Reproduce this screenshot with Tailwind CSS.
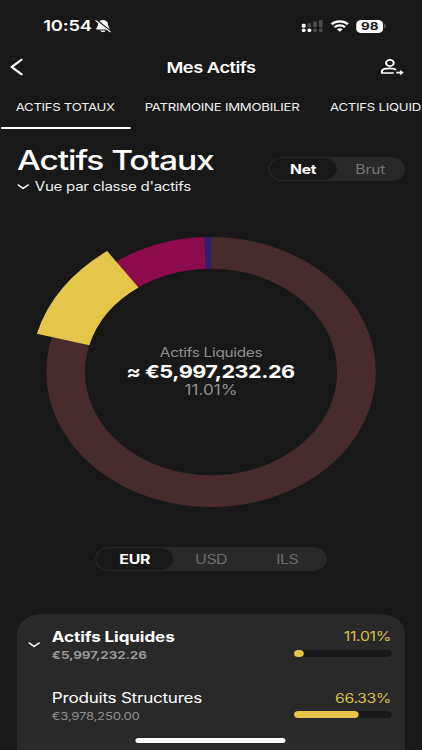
<!DOCTYPE html>
<html lang="fr">
<head>
  <meta charset="UTF-8" />
  <meta name="viewport" content="width=device-width, initial-scale=1.0"/>
  <title>Mes Actifs</title>
  <script src="https://cdn.jsdelivr.net/npm/@tailwindcss/browser@4"></script>
</head>
<body class="bg-[#181818] overflow-hidden">
  <div class="relative w-[346px] h-[750px] origin-top-left scale-x-[1.22] overflow-hidden bg-[#181818] text-white font-['Inter',sans-serif]">

    <!-- Status bar -->
    <div class="h-[52px] flex items-center justify-between pl-[35.500px] pr-[30px]">
      <div class="flex items-center gap-[2.500px]">
        <span class="text-[15px] font-semibold tracking-[-0.15px]">10:54</span>
        <svg class="w-[13px] h-[14px]" viewBox="0 0 13 14" fill="none">
          <path d="M6.300 1C4 1 2.300 2.700 2.300 5.200 2.300 8 .8 8.600.8 10.500h11.200c0-1.900-1.500-2.500-1.500-5.300C10.500 2.700 8.600 1 6.300 1z" fill="#fff"/>
          <path d="M4.300 11.400h4.200c-.2 1-1 1.700-2.100 1.700s-1.900-.7-2.100-1.700z" fill="#fff"/>
          <path d="M1.200 1l11.500 11.200" stroke="#181818" stroke-width="1.600"/>
          <path d="M.5 1.700l11.900 11.100" stroke="#fff" stroke-width="1" stroke-linecap="round"/>
        </svg>
      </div>
      <div class="flex items-center">
        <svg class="w-[18px] h-[14px]" viewBox="0 0 18 14">
          <g fill="#4b4b4b">
            <rect x="5" y="4" width="3" height="4.500" rx="1"/>
            <rect x="9.700" y="2.500" width="3" height="6" rx="1"/>
            <rect x="14.400" y="1" width="3" height="7.500" rx="1"/>
            <rect x="9.700" y="9.600" width="3" height="3.400" rx="1"/>
            <rect x="14.400" y="9.600" width="3" height="3.400" rx="1"/>
          </g>
          <g fill="#fff">
            <rect x=".3" y="4.800" width="3.200" height="4" rx="1.200"/>
            <rect x=".3" y="9.500" width="3.200" height="3.500" rx="1.500"/>
            <rect x="5" y="9.500" width="3.200" height="3.500" rx="1.500"/>
          </g>
        </svg>
        <svg class="w-[15px] h-[12px] ml-[6px]" viewBox="0 0 15 12" fill="none" stroke="#fff" stroke-width="2.200">
          <path d="M.8 4.300c3.700-3.800 9.700-3.800 13.400 0"/>
          <path d="M3.200 7.200c2.400-2.400 6.200-2.400 8.600 0"/>
          <path d="M7.500 11.700L5.100 9.200c1.300-1.300 3.500-1.300 4.800 0z" fill="#fff" stroke="none"/>
        </svg>
        <span class="ml-[6px] w-[22px] h-[13px] rounded-[4px] bg-white text-[#181818] text-[11px] leading-[13px] font-bold text-center">98</span>
        <span class="ml-[1px] w-[1px] h-[4px] rounded-r-full bg-[#777]"></span>
      </div>
    </div>

    <!-- Header -->
    <div class="h-[30px] flex items-center justify-between pl-[8px] pr-[15px]">
      <svg class="w-[12px] h-[18px]" viewBox="0 0 12 18" fill="none" stroke="#fff" stroke-width="2.100" stroke-linecap="round" stroke-linejoin="round">
        <path d="M9.600 1.800L1.600 9l8 7.200"/>
      </svg>
      <h1 class="ml-[14px] pt-[2px] text-[15px] font-semibold tracking-[-0.4px]">Mes Actifs</h1>
      <svg class="w-[19px] h-[18px]" viewBox="0 0 19 18" fill="none" stroke="#fff" stroke-width="1.700" stroke-linejoin="round">
        <circle cx="7.600" cy="5" r="3.100"/>
        <path d="M10.800 15H1v-1.400c0-2 2.600-3.200 6.500-3.200 2.700 0 4.300.6 5.100 1.700"/>
        <path d="M12.800 14.600h4.400" />
        <path d="M16 11.900l3 2.700-3 2.700z" fill="#fff" stroke="none"/>
      </svg>
    </div>

    <!-- Tabs -->
    <div class="h-[47px] flex whitespace-nowrap text-[10.8px] leading-[52px] text-[#f0f0f0]">
      <div class="ml-[0.5px] w-[106px] h-[47px] shrink-0 border-b-2 border-white text-center tracking-[-0.25px]">ACTIFS TOTAUX</div>
      <div class="ml-[0.5px] w-[150px] shrink-0 text-center tracking-[-0.2px]">PATRIMOINE IMMOBILIER</div>
      <div class="ml-[13.500px] shrink-0 tracking-[-0.2px]">ACTIFS LIQUID</div>
    </div>

    <!-- Title -->
    <div class="h-[93px] flex justify-between pl-[14px] pr-[14px]">
      <div class="pt-[15px]">
        <h2 class="text-[27.5px] leading-[32px] font-medium tracking-[-0.9px]">Actifs Totaux</h2>
        <div class="flex items-center gap-[4.500px] mt-px text-[12.4px] leading-[19px] text-[#f0f0f0]">
          <svg class="w-[10px] h-[6px]" viewBox="0 0 10 6" fill="none" stroke="#fff" stroke-width="1.400" stroke-linecap="round" stroke-linejoin="round">
            <path d="M1 1l4 3.600L9 1"/>
          </svg>
          <span class="tracking-[-0.24px]">Vue par classe d'actifs</span>
        </div>
      </div>
      <div class="mt-[28px] w-[112px] h-[24px] p-px flex rounded-full bg-[#292929] text-[12.8px] leading-[23px] text-center">
        <span class="w-[55px] h-[22px] rounded-full bg-[#181818] font-bold tracking-[-0.15px]">Net</span>
        <span class="flex-1 text-[#777] tracking-[-0.1px]">Brut</span>
      </div>
    </div>

    <!-- Donut: each slice is a dash on a 360 unit ring -->
    <div class="grid place-items-center">
      <svg class="col-start-1 row-start-1 w-[300px] h-[300px]" viewBox="0 0 300 300" fill="none">
        <g transform="rotate(-90 150 150)" stroke-width="31.700">
          <circle cx="150" cy="150" r="119.200" pathLength="360" stroke="#482b2d" stroke-dasharray="285 75"/>
          <circle cx="150" cy="150" r="119.200" pathLength="360" stroke="#8c0b4c" stroke-dasharray="33.100 326.900" stroke-dashoffset="-324.600"/>
          <circle cx="150" cy="150" r="119.200" pathLength="360" stroke="#2e2068" stroke-dasharray="2.400 357.600" stroke-dashoffset="-357.600"/>
          <circle cx="150" cy="150" r="125.600" pathLength="360" stroke="#e5c64b" stroke-width="44.500" stroke-dasharray="39.840 320.160" stroke-dashoffset="-285"/>
        </g>
      </svg>
      <div class="col-start-1 row-start-1 -mt-px text-center text-[#8f8f8f]">
        <div class="text-[12.6px] leading-[18px] tracking-[-0.25px]">Actifs Liquides</div>
        <div class="-ml-px text-[17.800px] leading-[19px] font-bold text-white tracking-[-0.43px]">≈ €5,997,232.26</div>
        <div class="text-[14px] leading-[18px]">11.01%</div>
      </div>
    </div>

    <!-- Currency -->
    <div class="mt-[25px] mx-auto w-[190px] h-[24px] p-px flex rounded-full bg-[#292929] text-[13px] leading-[23px] text-center text-[#707070]">
      <span class="w-[63px] h-[22px] rounded-full bg-[#181818] font-bold text-white tracking-[-0.2px]">EUR</span>
      <span class="w-[62px] tracking-[-0.4px]">USD</span>
      <span class="w-[63px] tracking-[-0.4px]">ILS</span>
    </div>

    <!-- Asset list -->
    <div class="mt-[43px] mx-[14px] h-[160px] rounded-t-[20px] bg-[#292929] pr-[11.500px] pt-[13px]">
      <div class="h-[61px] flex">
        <svg class="w-[10px] h-[6px] ml-[8.500px] mt-[15px]" viewBox="0 0 10 6" fill="none" stroke="#fff" stroke-width="1.400" stroke-linecap="round" stroke-linejoin="round">
          <path d="M1 1l4 3.600L9 1"/>
        </svg>
        <div class="ml-[10px] flex-1 font-bold">
          <div class="text-[14px] leading-[19px] tracking-[-0.08px]">Actifs Liquides</div>
          <div class="text-[11px] leading-[18px] tracking-[-0.12px] text-[#999]">€5,997,232.26</div>
        </div>
        <div class="w-[80px]">
          <div class="text-right text-[13px] leading-[19px] tracking-[-0.25px] text-[#d9bd4a]">11.01%</div>
          <div class="mt-[4px] h-[7px] rounded-full bg-[#181818]">
            <div class="h-[7px] rounded-full bg-[#e5c64b]" style="width: 11.01%"></div>
          </div>
        </div>
      </div>
      <div class="h-[61px] flex">
        <div class="ml-[28.5px] flex-1">
          <div class="text-[14px] leading-[20px] tracking-[-0.2px]">Produits Structures</div>
          <div class="text-[10.8px] leading-[17px] tracking-[-0.22px] text-[#8f8f8f]">€3,978,250.00</div>
        </div>
        <div class="w-[80px]">
          <div class="text-right text-[13px] leading-[20px] tracking-[-0.35px] text-[#d9bd4a]">66.33%</div>
          <div class="mt-[3px] h-[7px] rounded-full bg-[#181818]">
            <div class="h-[7px] rounded-full bg-[#e5c64b]" style="width: 66.33%"></div>
          </div>
        </div>
      </div>
    </div>

    <!-- Home indicator -->
    <div class="absolute bottom-[7px] left-[111px] w-[123px] h-[5px] rounded-full bg-white"></div>
  </div>
</body>
</html>
